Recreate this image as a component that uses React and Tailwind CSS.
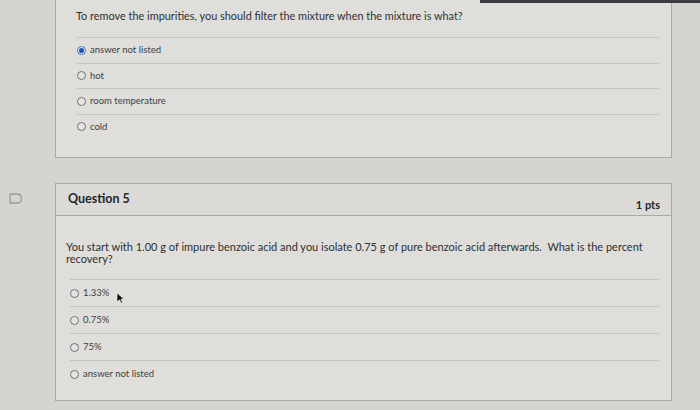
import React from 'react';

const Radio = ({ checked }) => (
  <span className={`inline-flex items-center justify-center w-[9px] h-[9px] rounded-full border ${checked ? 'border-[#3f6fc9] bg-[#e8eef8]' : 'border-[#6f7377] bg-[#e4e4e2]'}`}>
    {checked && <span className="w-[5px] h-[5px] rounded-full bg-[#1f4fb0]" />}
  </span>
);

const Option = ({ label, checked, rowH = 'h-[26px]' }) => (
  <div className={`flex items-center gap-[4px] border-t border-[#c4c4c0] ${rowH}`}>
    <Radio checked={checked} />
    <span className="text-[9.5px] text-[#3a3f44]">{label}</span>
  </div>
);

const Bookmark = () => (
  <svg width="14" height="11" viewBox="0 0 14 11" className="block">
    <path d="M1 1 H8 Q12.5 1 12.5 5.5 Q12.5 10 8 10 H1 Z" fill="none" stroke="#9a9b98" strokeWidth="1.3" strokeLinejoin="round" />
  </svg>
);

const Cursor = () => (
  <svg width="9" height="12" viewBox="0 0 9 12" className="absolute left-[116px] top-[292px]">
    <path d="M1 1 L1 10 L3.5 7.8 L5.2 11.2 L6.6 10.5 L5 7.2 L8 7 Z" fill="#111" stroke="#fff" strokeWidth="0.6" />
  </svg>
);

const questionOne = ['answer not listed', 'hot', 'room temperature', 'cold'];
const questionFive = ['1.33%', '0.75%', '75%', 'answer not listed'];

export default function App() {
  return (
    <div className="relative w-[700px] h-[410px] overflow-hidden bg-[#d5d4cf]" style={{ fontFamily: 'Lato, "Open Sans", sans-serif' }}>
      <div className="absolute right-0 top-0 w-[220px] h-[3px] bg-[#3c3d42]" />

      <div className="flex flex-col pl-[55px] pr-[28px]">
        {/* previous question */}
        <div className="-mt-[10px] h-[168px] border border-[#a8a8a4] bg-[#dfdeda] pl-[17px] pr-[12px]">
          <div className="pt-[17px] pl-[3px] h-[46px] text-[10.9px] text-[#2d3035]">
            To remove the impurities, you should filter the mixture when the mixture is what?
          </div>
          <div className="pl-[4px]">
            {questionOne.map((o, i) => (
              <Option key={o} label={o} checked={i === 0} rowH="h-[25.5px]" />
            ))}
          </div>
        </div>

        {/* question 5 */}
        <div className="flex mt-[25px] -ml-[35px]">
          <div className="w-[35px] pt-[10px] flex justify-start">
            <div className="-ml-[11px]"><Bookmark /></div>
          </div>
          <div className="flex-1 h-[218px] border border-[#a8a8a4] bg-[#dfdeda]">
            <div className="flex justify-between items-start h-[32px] border-b border-[#a8a8a4] bg-[#dbdad6] pl-[12px] pr-[11px]">
              <span className="pt-[6px] text-[12.5px] font-bold text-[#23272b]">Question 5</span>
              <span className="pt-[13px] text-[11px] font-bold text-[#23272b]">1 pts</span>
            </div>
            <div className="pl-[10px] pr-[12px]">
              <p className="pt-[25px] text-[11px] leading-[12px] text-[#2d3035]">
                You start with 1.00 g of impure benzoic acid and you isolate 0.75 g of pure benzoic acid afterwards.&nbsp; What is the percent recovery?
              </p>
              <div className="mt-[14px] pl-[4px]">
                {questionFive.map((o) => (
                  <Option key={o} label={o} rowH="h-[27px]" />
                ))}
              </div>
            </div>
          </div>
        </div>
      </div>

      <Cursor />
    </div>
  );
}
